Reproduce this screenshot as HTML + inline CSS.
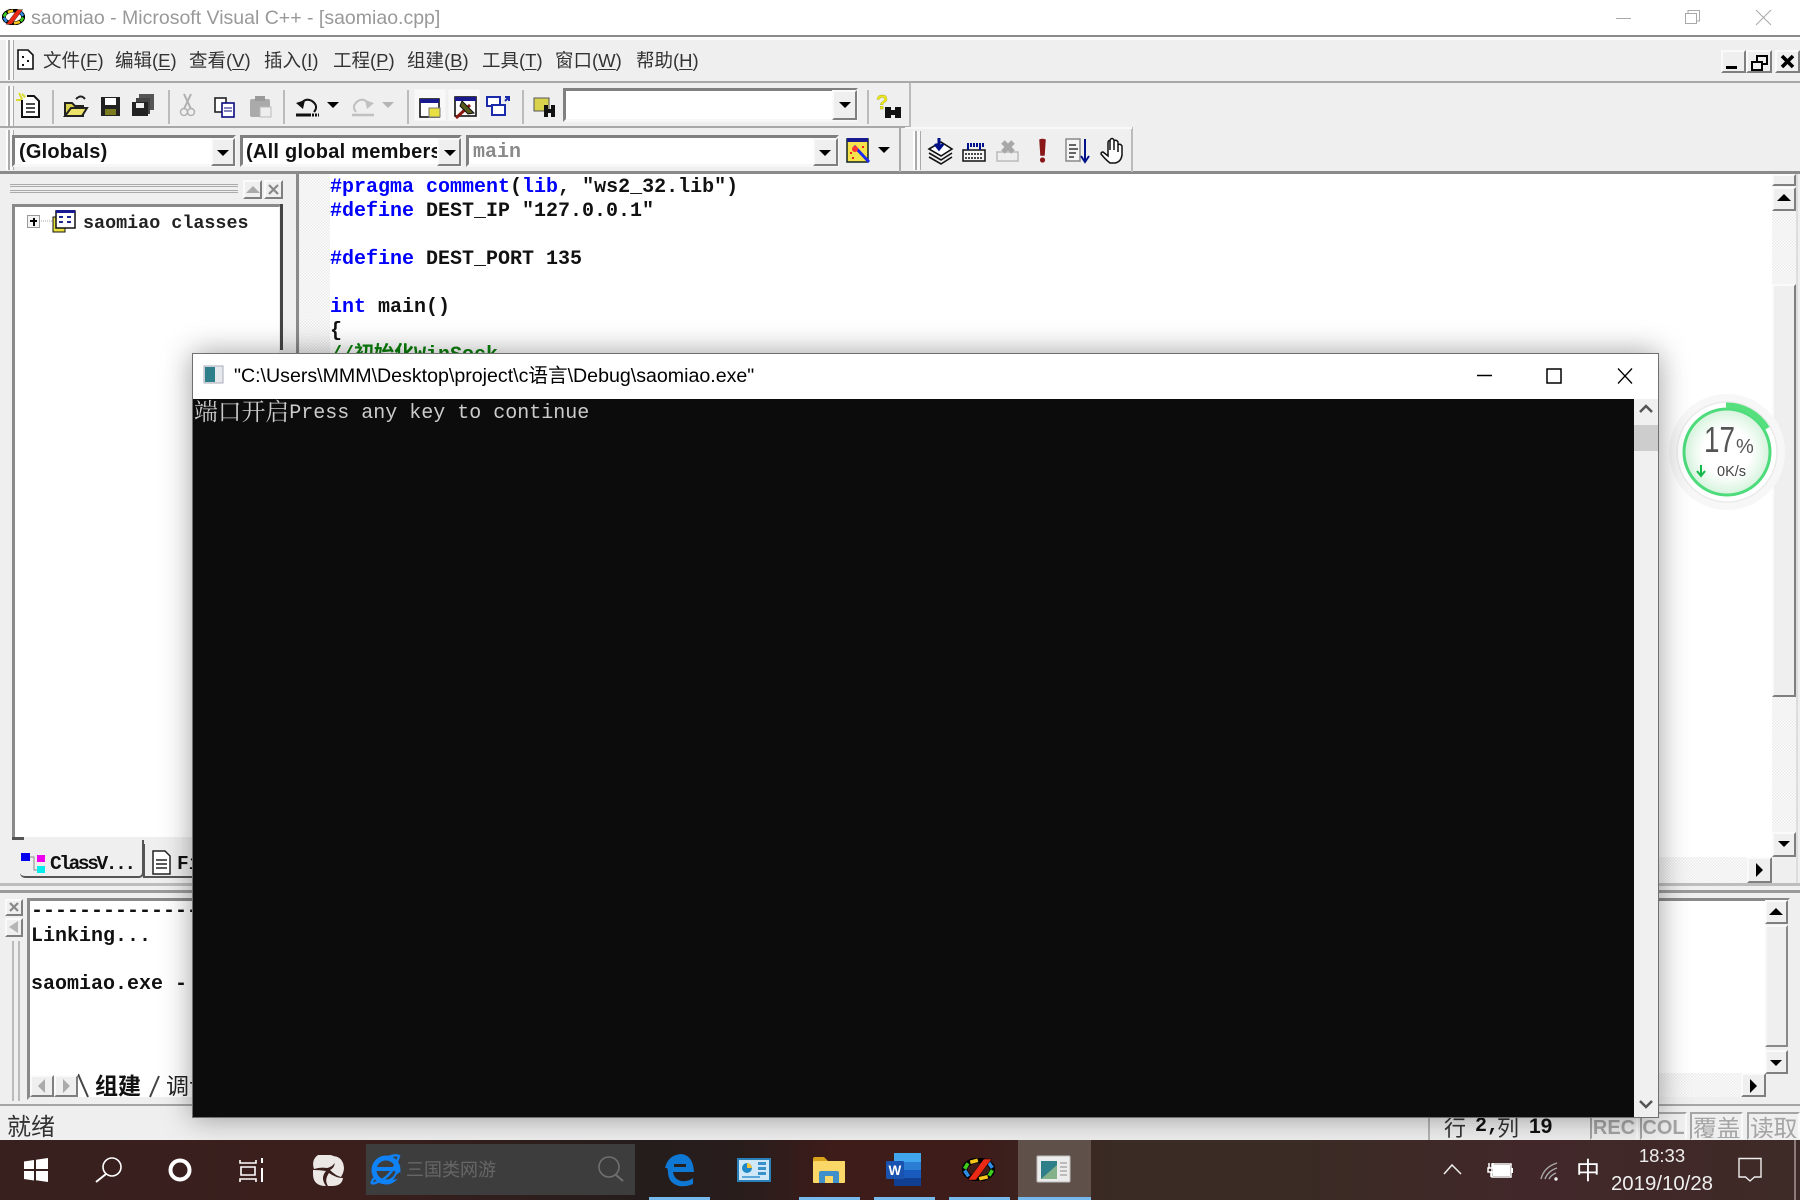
<!DOCTYPE html>
<html><head><meta charset="utf-8"><style>
html,body{margin:0;padding:0;width:1800px;height:1200px;overflow:hidden;background:#efefef}
body{filter:blur(.35px)}
*{box-sizing:border-box}
.a{position:absolute;white-space:pre}
.m{font-family:"Liberation Mono","Noto Sans CJK SC",monospace;font-weight:bold;font-size:20px;line-height:24px;color:#111}
.k{color:#0000ff}
.sunk{border:3px solid;border-color:#808080 #f7f7f7 #f7f7f7 #808080;background:#fff}
.btn{position:absolute;background:#efefef;border:2px solid;border-color:#fafafa #7f7f7f #7f7f7f #fafafa}
.hatch{position:absolute;background:repeating-conic-gradient(#ececec 0 25%,#fcfcfc 0 50%) 0 0/3px 3px}
.menu{position:absolute;top:48px;font:18.5px/26px "Liberation Sans","Noto Sans CJK SC",sans-serif;color:#333;white-space:pre}
.menu u{text-underline-offset:2px}
.drop{position:absolute;width:0;height:0;border-left:6px solid transparent;border-right:6px solid transparent;border-top:6px solid #000}
.up{position:absolute;width:0;height:0;border-left:7px solid transparent;border-right:7px solid transparent;border-bottom:7px solid #000}
.rt{position:absolute;width:0;height:0;border-top:7px solid transparent;border-bottom:7px solid transparent;border-left:7px solid #000}
.grip{position:absolute;border-left:2px solid #fff;border-right:2px solid #aaa;box-shadow:3px 0 0 #f8f8f8,4px 0 0 #aaa;width:4px}
.status{position:absolute;top:1112px;height:28px;border:2px solid;border-color:#a5a5a5 #f9f9f9 transparent #a5a5a5;color:#a5a5a5;font:bold 20px/28px "Liberation Sans",sans-serif;text-align:center;overflow:hidden;white-space:nowrap}
</style></head><body>

<!-- title bar -->
<div class="a" style="left:0;top:0;width:1800px;height:35px;background:#fff"></div>
<div class="a" style="left:0;top:35px;width:1800px;height:2px;background:#8a8a8a"></div>
<div class="a" style="left:31px;top:7px;font:19.5px/23px 'Liberation Sans',sans-serif;color:#999">saomiao - Microsoft Visual C++ - [saomiao.cpp]</div>

<!-- menu bar -->
<div class="a" style="left:0;top:37px;width:1800px;height:3px;background:#fafafa"></div>
<div class="a" style="left:0;top:81px;width:1800px;height:2px;background:#a8a8a8"></div>
<div class="menu" style="left:43px">文件(<u>F</u>)</div>
<div class="menu" style="left:115px">编辑(<u>E</u>)</div>
<div class="menu" style="left:189px">查看(<u>V</u>)</div>
<div class="menu" style="left:264px">插入(<u>I</u>)</div>
<div class="menu" style="left:333px">工程(<u>P</u>)</div>
<div class="menu" style="left:407px">组建(<u>B</u>)</div>
<div class="menu" style="left:482px">工具(<u>T</u>)</div>
<div class="menu" style="left:555px">窗口(<u>W</u>)</div>
<div class="menu" style="left:636px">帮助(<u>H</u>)</div>
<div class="grip" style="left:6px;top:40px;height:40px"></div>

<!-- MDI buttons -->
<div class="btn" style="left:1721px;top:50px;width:25px;height:23px"></div>
<div class="btn" style="left:1746px;top:50px;width:26px;height:23px"></div>
<div class="btn" style="left:1775px;top:50px;width:25px;height:23px"></div>

<!-- toolbar 1 -->
<div class="a" style="left:0;top:126px;width:910px;height:2px;background:#a8a8a8"></div>
<div class="a" style="left:909px;top:83px;width:2px;height:44px;background:#bbb"></div>
<div class="grip" style="left:6px;top:86px;height:40px"></div>
<div class="a" style="left:52px;top:90px;width:2px;height:34px;background:#bbb"></div>
<div class="a" style="left:168px;top:90px;width:2px;height:34px;background:#bbb"></div>
<div class="a" style="left:283px;top:90px;width:2px;height:34px;background:#bbb"></div>
<div class="a" style="left:407px;top:90px;width:2px;height:34px;background:#bbb"></div>
<div class="a" style="left:522px;top:90px;width:2px;height:34px;background:#bbb"></div>
<div class="a" style="left:867px;top:90px;width:2px;height:34px;background:#bbb"></div>
<div class="a" style="left:414px;top:89px;width:32px;height:32px;background:#f8f8f8;border:1px solid #f4f4f4"></div>
<div class="a" style="left:448px;top:89px;width:32px;height:32px;background:#f8f8f8;border:1px solid #f4f4f4"></div>
<div class="a sunk" style="left:563px;top:88px;width:295px;height:34px"></div>
<div class="btn" style="left:832px;top:90px;width:25px;height:30px"></div>
<div class="drop" style="left:839px;top:102px"></div>

<!-- toolbar 2 -->
<div class="a" style="left:0;top:171px;width:1800px;height:3px;background:#8a8a8a"></div>
<div class="a" style="left:899px;top:127px;width:2px;height:45px;background:#aaa"></div>
<div class="a" style="left:1131px;top:127px;width:2px;height:45px;background:#bbb"></div>
<div class="a" style="left:905px;top:127px;width:227px;height:2px;background:#f8f8f8"></div>
<div class="grip" style="left:6px;top:130px;height:40px"></div>
<div class="grip" style="left:913px;top:131px;height:39px"></div>
<div class="a sunk" style="left:12px;top:135px;width:224px;height:32px"></div>
<div class="btn" style="left:211px;top:138px;width:24px;height:28px"></div><div class="drop" style="left:217px;top:150px"></div>
<div class="a sunk" style="left:240px;top:135px;width:222px;height:32px"></div>
<div class="btn" style="left:437px;top:138px;width:24px;height:28px"></div><div class="drop" style="left:444px;top:150px"></div>
<div class="a sunk" style="left:466px;top:135px;width:373px;height:32px"></div>
<div class="btn" style="left:813px;top:138px;width:25px;height:28px"></div><div class="drop" style="left:819px;top:150px"></div>
<div class="drop" style="left:878px;top:147px"></div>
<div class="a" style="left:19px;top:140px;font:bold 20px/24px 'Liberation Sans',sans-serif;color:#111;letter-spacing:.2px">(Globals)</div>
<div class="a" style="left:246px;top:140px;width:191px;overflow:hidden;font:bold 20px/24px 'Liberation Sans',sans-serif;color:#111;letter-spacing:.25px">(All global members</div>
<div class="a m" style="left:473px;top:141px;color:#8a8a8a">main</div>

<!-- left class pane -->
<div class="a" style="left:10px;top:184px;width:228px;height:3px;border-top:1px solid #aaa;border-bottom:1px solid #aaa"></div>
<div class="a" style="left:10px;top:190px;width:228px;height:3px;border-top:1px solid #aaa;border-bottom:1px solid #aaa"></div>
<div class="btn" style="left:243px;top:180px;width:19px;height:19px"></div>
<div class="btn" style="left:264px;top:180px;width:19px;height:19px"></div>
<div class="up" style="left:246px;top:186px;border-bottom-color:#aaa"></div>
<div class="a" style="left:12px;top:204px;width:270px;height:636px;background:#fff;border:3px solid;border-color:#8a8a8a #efefef #efefef #8a8a8a"></div>
<div class="a" style="left:280px;top:204px;width:3px;height:146px;background:#444"></div>
<div class="a" style="left:27px;top:215px;width:13px;height:13px;background:#f4f4f4;border:1px solid #999"></div>
<div class="a" style="left:30px;top:220px;width:7px;height:2px;background:#000"></div>
<div class="a" style="left:33px;top:218px;width:2px;height:8px;background:#000"></div>
<div class="a" style="left:83px;top:212px;font:bold 18.4px/24px 'Liberation Mono',monospace;color:#222">saomiao classes</div>
<!-- class tabs -->
<div class="a" style="left:12px;top:837px;width:12px;height:3px;background:#555"></div>
<div class="a" style="left:20px;top:840px;width:124px;height:38px;background:#efefef;border-bottom:2px solid #555;border-right:2px solid #555;border-radius:0 0 5px 5px"></div>
<div class="a" style="left:143px;top:844px;width:60px;height:34px;border-left:2px solid #555;border-bottom:2px solid #555"></div>
<div class="a" style="left:50px;top:850px;font:bold 19.5px/28px 'Liberation Mono',monospace;color:#111;letter-spacing:-2.4px">ClassV...</div>
<div class="a" style="left:177px;top:850px;font:bold 19.5px/28px 'Liberation Mono',monospace;color:#111">Fi</div>

<!-- code pane -->
<div class="a" style="left:296px;top:174px;width:4px;height:712px;background:#8a8a8a;border-right:1px solid #eee"></div>
<div class="a" style="left:300px;top:174px;width:1472px;height:683px;background:#fff"></div>
<div class="hatch" style="left:300px;top:174px;width:30px;height:683px"></div>
<div class="a m" style="left:330px;top:176px"><span class="k">#pragma comment</span>(<span class="k">lib</span>, "ws2_32.lib")</div>
<div class="a m" style="left:330px;top:200px"><span class="k">#define</span> DEST_IP "127.0.0.1"</div>
<div class="a m" style="left:330px;top:248px"><span class="k">#define</span> DEST_PORT 135</div>
<div class="a m" style="left:330px;top:296px"><span class="k">int</span> main()</div>
<div class="a m" style="left:330px;top:320px">{</div>
<div class="a m" style="left:330px;top:344px;color:#0a800a">//初始化WinSock</div>

<!-- code scrollbars -->
<div class="hatch" style="left:1772px;top:175px;width:24px;height:682px"></div>
<div class="btn" style="left:1772px;top:174px;width:24px;height:12px"></div>
<div class="btn" style="left:1772px;top:187px;width:24px;height:24px"></div><div class="up" style="left:1777px;top:194px;border-bottom-color:#000"></div>
<div class="btn" style="left:1772px;top:284px;width:24px;height:413px"></div>
<div class="btn" style="left:1772px;top:832px;width:24px;height:25px"></div><div class="drop" style="left:1778px;top:841px"></div>
<div class="hatch" style="left:300px;top:857px;width:1447px;height:26px"></div>
<div class="btn" style="left:1747px;top:857px;width:25px;height:26px"></div><div class="rt" style="left:1756px;top:863px"></div>
<div class="a" style="left:1796px;top:174px;width:2px;height:712px;background:#ddd"></div>

<!-- splitter -->
<div class="a" style="left:0;top:883px;width:1800px;height:3px;background:#bdbdbd"></div>
<div class="a" style="left:0;top:890px;width:1800px;height:3px;background:#9a9a9a"></div>

<!-- output pane -->
<div class="btn" style="left:5px;top:899px;width:18px;height:17px"></div>
<div class="btn" style="left:5px;top:918px;width:18px;height:19px"></div>
<div class="a" style="left:12px;top:941px;width:8px;height:160px;border-left:2px solid #bbb;border-right:2px solid #bbb"></div>
<div class="a" style="left:27px;top:898px;width:1763px;height:202px;border:3px solid;border-color:#8a8a8a #efefef #efefef #8a8a8a;background:#fff"></div>
<div class="a m" style="left:31px;top:900px">--------------</div>
<div class="a m" style="left:31px;top:925px">Linking...</div>
<div class="a m" style="left:31px;top:973px">saomiao.exe -</div>
<div class="btn" style="left:30px;top:1075px;width:24px;height:22px"></div>
<div class="btn" style="left:54px;top:1075px;width:24px;height:22px"></div>
<div class="a" style="left:38px;top:1079px;border-top:7px solid transparent;border-bottom:7px solid transparent;border-right:7px solid #aaa"></div>
<div class="rt" style="left:63px;top:1079px;border-left-color:#aaa"></div>
<svg class="a" style="left:78px;top:1072px" width="120" height="28"><path d="M0 2L10 25M72 25L81 4" fill="none" stroke="#444" stroke-width="2"/></svg>
<div class="a" style="left:95px;top:1072px;font:bold 23px/28px 'Liberation Sans','Noto Sans CJK SC',sans-serif;color:#111">组建</div>
<div class="a" style="left:166px;top:1072px;font:23px/28px 'Liberation Sans','Noto Sans CJK SC',sans-serif;color:#222">调试</div>
<div class="hatch" style="left:193px;top:1073px;width:1548px;height:24px"></div>
<div class="btn" style="left:1741px;top:1073px;width:25px;height:24px"></div><div class="rt" style="left:1750px;top:1079px"></div>
<div class="a" style="left:1766px;top:900px;width:22px;height:198px;background:#efefef"></div>
<div class="btn" style="left:1765px;top:900px;width:23px;height:24px"></div><div class="up" style="left:1769px;top:908px"></div>
<div class="btn" style="left:1765px;top:925px;width:23px;height:122px;border-color:#f8f8f8 #8a8a8a #8a8a8a #f8f8f8"></div>
<div class="btn" style="left:1765px;top:1050px;width:23px;height:24px"></div><div class="drop" style="left:1770px;top:1060px"></div>

<!-- status bar -->
<div class="a" style="left:0;top:1104px;width:1800px;height:2px;background:#a5a5a5"></div>
<div class="a" style="left:7px;top:1112px;font:24px/32px 'Liberation Sans','Noto Sans CJK SC',sans-serif;color:#333">就绪</div>
<div class="a" style="left:1428px;top:1112px;width:160px;height:28px;border-left:2px solid #b5b5b5;border-top:2px solid #b5b5b5"></div>
<div class="a" style="left:1444px;top:1112px;font:22px/30px 'Noto Sans CJK SC',sans-serif;color:#333">行</div>
<div class="a" style="left:1475px;top:1113px;font:bold 20px/28px 'Liberation Mono',monospace;color:#111">2,</div>
<div class="a" style="left:1497px;top:1112px;font:22px/30px 'Noto Sans CJK SC',sans-serif;color:#333">列</div>
<div class="a" style="left:1529px;top:1113px;font:bold 21px/28px 'Liberation Sans',sans-serif;color:#111">19</div>
<div class="status" style="left:1590px;width:48px">REC</div>
<div class="status" style="left:1640px;width:47px">COL</div>
<div class="status" style="left:1690px;width:53px;font:24px/26px 'Noto Sans CJK SC',sans-serif;letter-spacing:-.5px">覆盖</div>
<div class="status" style="left:1747px;width:53px;font:24px/26px 'Noto Sans CJK SC',sans-serif;letter-spacing:-.5px">读取</div>

<!-- network widget -->
<svg class="a" style="left:1665px;top:390px" width="124" height="124" viewBox="1665 390 124 124">
<defs><radialGradient id="g" cx="50%" cy="50%" r="50%"><stop offset="55%" stop-color="#fff"/><stop offset="100%" stop-color="#d5f3dc"/></radialGradient></defs>
<circle cx="1727" cy="452" r="58" fill="#f7f7f7"/>
<circle cx="1727" cy="452" r="50" fill="#fff" stroke="#ebebeb" stroke-width="1.5"/>
<circle cx="1727" cy="452" r="43" fill="url(#g)" stroke="#4ddb7c" stroke-width="3"/>
<path d="M1726 405.5A46.5 46.5 0 0 1 1767 428.5" fill="none" stroke="#55e07d" stroke-width="6"/>
<text x="1704" y="452" font-family="Liberation Sans" font-size="36" fill="#555" textLength="31" lengthAdjust="spacingAndGlyphs">17</text>
<text x="1736" y="453" font-family="Liberation Sans" font-size="20" fill="#555">%</text>
<text x="1717" y="476" font-family="Liberation Sans" font-size="14.5" fill="#444">0K/s</text>
<path d="M1701 465V475M1697 471L1701 476L1705 471" fill="none" stroke="#12b84a" stroke-width="2"/>
</svg>

<!-- console window -->
<div class="a" style="left:192px;top:353px;width:1467px;height:765px;background:#fff;border:1px solid #707070;box-shadow:0 0 28px rgba(0,0,0,.38);overflow:hidden">
 <div class="a" style="left:0;top:45px;width:1441px;height:719px;background:#0c0c0c"></div>
 <div class="a" style="left:1441px;top:45px;width:25px;height:719px;background:#f0f0f0"></div>
 <div class="a" style="left:1441px;top:71px;width:24px;height:26px;background:#cdcdcd"></div>
 <div class="a" style="left:41px;top:10px;width:560px;font:19.6px/24px 'Liberation Sans','Noto Sans CJK SC',sans-serif;color:#000">"C:\Users\MMM\Desktop\project\c语言\Debug\saomiao.exe"</div>
 <div class="a" style="left:1px;top:40px;height:40px;font:20px/28px 'Liberation Mono',monospace;color:#cccccc"><span style="font:23.8px/28px 'Noto Serif CJK SC',serif;position:relative;top:2px">端口开启</span>Press any key to continue</div>
 <svg class="a" style="left:1px;top:0" width="1466" height="765">
  <path d="M1283 21.5H1298" stroke="#000" stroke-width="1.5"/>
  <rect x="1353" y="15" width="14" height="14" fill="none" stroke="#000" stroke-width="1.5"/>
  <path d="M1424 14.5L1438 29.5M1438 14.5L1424 29.5" stroke="#000" stroke-width="1.3"/>
  <rect x="10" y="12" width="19" height="17" fill="#e6e9ec" stroke="#aab"/>
  <rect x="11" y="13" width="10" height="15" fill="#2f7f8a"/>
  <path d="M1446 416l6-6 6 6" transform="translate(0,-358)" fill="none" stroke="#555" stroke-width="2.5"/>
  <path d="M1446 1100l6 6 6-6" transform="translate(0,-353)" fill="none" stroke="#555" stroke-width="2.5"/>
 </svg>
</div>

<!-- taskbar -->
<div class="a" style="left:0;top:1140px;width:1800px;height:60px;background:linear-gradient(90deg,#38201f 0,#3a1f1c 20%,#241d1c 36%,#2a1d1c 42%,#3d1c1a 46%,#3d1c1a 54%,#3a2b24 62%,#3a2b24 72%,#42272a 85%,#3e2a26 100%)"></div>
<div class="a" style="left:366px;top:1144px;width:269px;height:51px;background:#3d3d3d"></div>
<div class="a" style="left:406px;top:1157px;font:18px/26px 'Liberation Sans','Noto Sans CJK SC',sans-serif;color:#666">三国类网游</div>
<div class="a" style="left:1018px;top:1140px;width:73px;height:60px;background:#5f5149"></div>
<div class="a" style="left:649px;top:1197px;width:61px;height:3px;background:#76b9ed"></div>
<div class="a" style="left:799px;top:1197px;width:61px;height:3px;background:#76b9ed"></div>
<div class="a" style="left:874px;top:1197px;width:61px;height:3px;background:#76b9ed"></div>
<div class="a" style="left:949px;top:1197px;width:61px;height:3px;background:#76b9ed"></div>
<div class="a" style="left:1018px;top:1197px;width:73px;height:3px;background:#76b9ed"></div>
<div class="a" style="left:1638px;top:1144px;width:48px;text-align:center;font:18.5px/24px 'Liberation Sans',sans-serif;color:#eee">18:33</div>
<div class="a" style="left:1608px;top:1172px;width:108px;text-align:center;font:20.4px/24px 'Liberation Sans',sans-serif;color:#eee">2019/10/28</div>
<div class="a" style="left:1576px;top:1154px;font:24px/30px 'Noto Sans CJK SC',sans-serif;color:#fff">中</div>
<div class="a" style="left:1794px;top:1140px;width:2px;height:60px;background:#8a7a78"></div>

<!-- icons overlay -->
<svg class="a" style="left:0;top:0;pointer-events:none" width="1800" height="1200" viewBox="0 0 1800 1200">
<defs>
<symbol id="vc" viewBox="0 0 100 70" preserveAspectRatio="none">
 <ellipse cx="50" cy="35" rx="42" ry="28" fill="none" stroke="#000" stroke-width="17"/>
 <path d="M25 13L48 7M52 63L78 57" stroke="#f7c616" stroke-width="11"/>
 <path d="M8 33L18 16M92 37L82 54" stroke="#3bd01c" stroke-width="11"/>
 <path d="M8 38L20 56M80 13L92 30" stroke="#2d8de8" stroke-width="11"/>
 <path d="M18 67L66 3H90L42 67Z" fill="#ea2a14" stroke="#000" stroke-width="1.5"/>
</symbol>
</defs>
<use href="#vc" x="2" y="9" width="23" height="16"/>

<!-- menu doc icon -->
<path d="M18 50H28L33 55V69H18Z" fill="#fff" stroke="#111" stroke-width="1.6"/><path d="M22 57h2M27 61h2M22 65h2" stroke="#111" stroke-width="2"/>

<!-- MDI glyphs -->
<path d="M1726 67.5h11" stroke="#000" stroke-width="3"/>
<rect x="1757" y="56" width="10" height="8" fill="none" stroke="#000" stroke-width="2"/><rect x="1752" y="62" width="10" height="8" fill="#efefef" stroke="#000" stroke-width="2"/>
<path d="M1782 56L1793 67M1793 56L1782 67" stroke="#000" stroke-width="3.6"/>

<!-- titlebar win controls -->
<path d="M1616 18.5H1631" stroke="#a8a8a8" stroke-width="1"/>
<rect x="1685.5" y="13.5" width="11" height="10" fill="none" stroke="#a8a8a8"/><path d="M1688 13V10.5H1699.5V21H1697" fill="none" stroke="#a8a8a8"/>
<path d="M1756 10L1771 25M1771 10L1756 25" stroke="#a8a8a8" stroke-width="1"/>

<!-- class pane X -->
<path d="M269 185L278 194M278 185L269 194" stroke="#888" stroke-width="2.2"/>

<!-- toolbar 1 icons -->
<path d="M22 94L27 99M16 100L24 100M19 93L22 99" stroke="#dbdb30" stroke-width="2"/>
<path d="M27 96H34L39 101V117H22V100" fill="#fff" stroke="#111" stroke-width="2"/><path d="M26 104H35M26 108H35M26 112H35" stroke="#111" stroke-width="1.5"/>
<path d="M65 116V103H72L75 106H83V116Z" fill="#d8d24c" stroke="#222" stroke-width="2"/><path d="M65 116L71 108H87L82 116Z" fill="#eee36a" stroke="#222" stroke-width="2"/><path d="M76 99Q81 94 85 99" fill="none" stroke="#222" stroke-width="2"/>
<rect x="101" y="97" width="19" height="19" fill="#222"/><rect x="105" y="98" width="11" height="7" fill="#fff"/><rect x="105" y="109" width="11" height="6" fill="#7b7b20"/>
<rect x="139" y="94" width="15" height="16" fill="#555"/><rect x="136" y="98" width="14" height="16" fill="#444"/><rect x="132" y="102" width="16" height="14" fill="#222"/><rect x="136" y="103" width="8" height="5" fill="#eee"/>
<path d="M184 109L191 94M191 109L184 94" stroke="#b0b0b0" stroke-width="2"/><circle cx="184" cy="112" r="3.5" fill="none" stroke="#b0b0b0" stroke-width="1.5"/><circle cx="191" cy="112" r="3.5" fill="none" stroke="#b0b0b0" stroke-width="1.5"/>
<rect x="215" y="98" width="11" height="14" fill="#fff" stroke="#222" stroke-width="1.6"/><rect x="222" y="103" width="12" height="14" fill="#fff" stroke="#0a0a80" stroke-width="1.6"/><path d="M224 108h8M224 111h8" stroke="#0a0a80"/>
<rect x="250" y="99" width="20" height="18" rx="2" fill="#aaa"/><rect x="255" y="96" width="10" height="5" fill="#999"/><rect x="260" y="107" width="11" height="10" fill="#eee" stroke="#bbb"/>
<path d="M300 105Q305 97 312 101Q319 106 314 112" fill="none" stroke="#111" stroke-width="2"/><path d="M296 103L305 100L303 109Z" fill="#111"/><path d="M296 115H311" stroke="#111" stroke-width="3"/><path d="M312 115h7" stroke="#111" stroke-dasharray="2 1" stroke-width="3"/>
<polygon points="327,102 339,102 333,108" fill="#000"/>
<path d="M370 105Q364 97 358 101Q351 106 356 112" fill="none" stroke="#c0c0c0" stroke-width="2"/><path d="M374 103L365 100L367 109Z" fill="#c0c0c0"/><path d="M352 115H374" stroke="#c0c0c0" stroke-width="2.5"/>
<polygon points="382,102 394,102 388,108" fill="#b4b4b4"/>
<rect x="420" y="99" width="19" height="18" fill="#fff" stroke="#111" stroke-width="1.6"/><rect x="420" y="99" width="19" height="4" fill="#1a1a90"/><rect x="429" y="108" width="11" height="9" fill="#e8e040" stroke="#777"/>
<rect x="455" y="97" width="21" height="19" fill="#fff" stroke="#111" stroke-width="1.6"/><rect x="455" y="97" width="21" height="4" fill="#1a1a90"/><path d="M456 118L470 105" stroke="#8a1a10" stroke-width="3"/><path d="M462 101L474 113L468 114L460 106Z" fill="#5a5a1a" stroke="#111"/>
<rect x="487" y="97" width="13" height="9" fill="#fff" stroke="#1a2aaa" stroke-width="2"/><rect x="492" y="105" width="13" height="10" fill="#fff" stroke="#1a2aaa" stroke-width="2"/><path d="M505 101L509 97M509 101V97H505" stroke="#1a2aaa" stroke-width="2" fill="none"/>
<rect x="534" y="98" width="15" height="13" fill="#d8d24c" stroke="#555"/><path d="M544 105h4v12h-4zM551 105h4v12h-4zM548 109h3v4h-3z" fill="#111"/>
<text x="876" y="109" font-family="Liberation Sans" font-weight="bold" font-size="20" fill="#efe81e" stroke="#a8a820" stroke-width=".4">?</text>
<path d="M885 107h6v11h-6zM895 107h6v11h-6zM891 110h4v5h-4z" fill="#111"/>

<!-- toolbar 2 icons -->
<rect x="847" y="139" width="21" height="23" fill="#f6e24a" stroke="#122" stroke-width="1.5"/><rect x="847" y="138" width="21" height="4" fill="#1a1a90"/><path d="M854 146L869 162" stroke="#1a2aee" stroke-width="3"/><circle cx="855" cy="149" r="3" fill="#f33"/><path d="M850 153h2M862 147h2M852 158h2" stroke="#e22" stroke-width="2"/>
<path d="M929 149L941 142L952 149L941 156Z" fill="#fff" stroke="#111" stroke-width="1.6"/><path d="M929 153L941 160L952 153M929 157L941 164L952 157" fill="none" stroke="#111" stroke-width="1.6"/><path d="M939 138V148M935 144L939 149L943 144" stroke="#00108a" stroke-width="3" fill="none"/>
<rect x="963" y="150" width="22" height="11" fill="#f4f4f4" stroke="#111" stroke-width="1.5"/><path d="M965 154h18M965 158h18" stroke="#111" stroke-dasharray="2 1" stroke-width="1.5"/><path d="M967 145h18" stroke="#00108a" stroke-dasharray="2 1" stroke-width="4"/><path d="M968 143v7M980 143v7" stroke="#00108a" stroke-width="2"/>
<rect x="997" y="152" width="21" height="9" fill="#eee" stroke="#bbb" stroke-width="1.5"/><path d="M1003 142L1013 152M1013 142L1003 152" stroke="#a8a8a8" stroke-width="5"/>
<path d="M1040 140Q1042 139 1045 140L1044 155H1041Z" fill="#8a1818" stroke="#8a1818" stroke-width="1.5"/><circle cx="1042.5" cy="160" r="2.6" fill="#8a1818"/>
<rect x="1066" y="139" width="14" height="22" fill="#f4f4f4" stroke="#8a8a8a" stroke-width="1.5"/><path d="M1069 145h7M1069 149h9M1069 153h7M1069 157h5" stroke="#333" stroke-width="1.5"/><path d="M1085 139V160M1081 156L1085 162L1089 156" stroke="#00108a" stroke-width="2" fill="none"/>
<path d="M1103 152L1108 156V143Q1108 140 1110 141V150V140Q1112 137 1114 140V150V141Q1116 139 1118 142V152V145Q1120 143 1122 146V155Q1121 162 1115 163H1110Q1106 160 1101 154Q1101 152 1103 152Z" fill="#fff" stroke="#111" stroke-width="1.5"/>

<!-- tree icon -->
<path d="M41 221H52" stroke="#aaa" stroke-dasharray="1 1"/>
<rect x="53" y="217" width="12" height="15" fill="#e8e040" stroke="#111"/><rect x="56" y="211" width="19" height="17" fill="#fff" stroke="#111" stroke-width="1.5"/><rect x="56" y="210" width="19" height="3" fill="#1a1a90"/><path d="M59 217h4M67 217h4M59 222h4M67 222h4" stroke="#1a2a90" stroke-width="2"/>

<!-- classview tab icons -->
<rect x="21" y="853" width="9" height="8" fill="#0000ee"/><rect x="37" y="855" width="8" height="7" fill="#ee00ee"/><rect x="37" y="866" width="8" height="7" fill="#00eeee"/><path d="M30 857H34V870H37" fill="none" stroke="#888"/>
<path d="M153 851H165L170 856V874H153Z" fill="#fff" stroke="#222" stroke-width="1.5"/><path d="M156 860h11M156 864h11M156 868h11" stroke="#222" stroke-width="1.5"/>

<!-- output close/arrow -->
<path d="M10 903L18 911M18 903L10 911" stroke="#888" stroke-width="2.2"/>
<polygon points="18,921 18,933 9,927" fill="#b5b5b5"/>

<!-- taskbar -->
<path d="M24 1161.5L34 1160V1169H24ZM36 1159.7L48 1158V1169H36ZM24 1171H34V1180.5L24 1179ZM36 1171H48V1182L36 1180.3Z" fill="#fff"/>
<circle cx="112" cy="1167" r="9" fill="none" stroke="#fff" stroke-width="1.6"/><path d="M106 1174L96 1182" stroke="#fff" stroke-width="2"/>
<circle cx="180" cy="1170" r="9.5" fill="none" stroke="#fff" stroke-width="4"/>
<path d="M240 1160V1163H256V1160M240 1182V1179H256V1182M241 1167H255V1175H241Z" fill="none" stroke="#fff" stroke-width="1.6"/><path d="M262 1158V1163M262 1168V1182" stroke="#fff" stroke-width="2"/>
<path d="M318 1155H330Q335 1155 335 1160Q335 1166 327 1168Q320 1167 314 1169Q311 1160 318 1155Z" fill="#ece8e6"/><path d="M332 1156Q343 1156 344 1168Q344 1172 341 1177Q336 1176 330 1170Q338 1166 332 1156Z" fill="#ece8e6"/><path d="M313 1170Q320 1170 326 1171Q320 1178 326 1186Q313 1186 313 1174Z" fill="#ece8e6"/><path d="M329 1173Q336 1178 343 1178Q342 1186 332 1186H328Q324 1180 329 1173Z" fill="#ece8e6"/>

<!-- IE -->
<circle cx="386" cy="1170" r="12" fill="none" stroke="#0f82f8" stroke-width="5"/><rect x="376" y="1167" width="22" height="4" fill="#0f82f8"/><path d="M397 1174L400 1172L400 1178L393 1180Z" fill="#3d3d3d"/>
<path d="M376 1176Q368 1185 375 1183Q392 1178 399 1156Q396 1154 386 1158" fill="none" stroke="#0f82f8" stroke-width="2.5"/>
<circle cx="609" cy="1167" r="10" fill="none" stroke="#707070" stroke-width="1.6"/><path d="M616 1175L623 1181" stroke="#707070" stroke-width="2"/>

<!-- Edge -->
<path d="M665 1168Q668 1155 681 1154Q693 1155 694 1172H673Q674 1179 681 1181Q688 1182 693 1178V1184Q686 1187 679 1186Q668 1183 668 1172Q668 1167 665 1168Z" fill="#0f78d4"/>
<rect x="674" y="1164" width="12" height="3" fill="#24201f"/>

<!-- control panel -->
<rect x="738" y="1159" width="32" height="22" fill="#cfe7f6" stroke="#2a80b8" stroke-width="2"/><circle cx="747" cy="1168" r="5" fill="#1e88c8"/><path d="M747 1168V1163A5 5 0 0 1 752 1168Z" fill="#f2c33a"/><rect x="758" y="1162" width="8" height="3" fill="#3a90c8"/><rect x="758" y="1167" width="8" height="3" fill="#3a90c8"/><rect x="758" y="1172" width="8" height="3" fill="#3a90c8"/><path d="M742 1177h18" stroke="#5aa8d8" stroke-width="2"/>

<!-- Folder -->
<path d="M813 1159Q813 1157 815 1157H824L828 1161H845V1165H813Z" fill="#d8a318"/><rect x="813" y="1161" width="32" height="22" rx="1" fill="#fbd768"/><path d="M819 1183V1173Q819 1171 821 1171H837Q839 1171 839 1173V1183H833V1176H825V1183Z" fill="#3f8fcb"/>

<!-- Word -->
<rect x="894" y="1153" width="27" height="9" fill="#41a5ee"/><rect x="894" y="1162" width="27" height="8" fill="#2b7cd3"/><rect x="894" y="1170" width="27" height="8" fill="#185abd"/><rect x="894" y="1178" width="27" height="8" fill="#103f91"/>
<rect x="886" y="1161" width="18" height="18" rx="1" fill="#1a52b0"/>
<text x="888.5" y="1175" font-family="Liberation Sans" font-weight="bold" font-size="13.5" fill="#fff">W</text>

<!-- VC taskbar -->
<use href="#vc" x="962" y="1158" width="33" height="23"/>

<!-- console taskbar -->
<rect x="1037" y="1156" width="33" height="26" rx="1" fill="#ececec" stroke="#bdbdbd"/><rect x="1041" y="1161" width="16" height="18" fill="#2f7f8a"/><path d="M1041 1179L1057 1165V1179Z" fill="#84b08a"/><path d="M1060 1163h7M1060 1167h7M1060 1171h7M1060 1175h7" stroke="#bbb" stroke-width="2"/>

<!-- tray -->
<path d="M1444 1174L1452 1165L1461 1174" fill="none" stroke="#eee" stroke-width="1.5"/>
<rect x="1493" y="1165" width="17" height="11" fill="#fff"/><rect x="1492" y="1164" width="19" height="13" fill="none" stroke="#fff" stroke-width="1.5"/><rect x="1511" y="1168" width="2" height="5" fill="#fff"/><path d="M1489 1163V1168M1493 1163V1168M1488 1168H1494V1172H1488ZM1491 1172V1177" fill="none" stroke="#fff" stroke-width="1.5"/>
<path d="M1541 1179Q1544 1167 1557 1163M1545 1179Q1548 1171 1557 1168M1549 1179Q1551 1175 1556 1173" fill="none" stroke="#aaa" stroke-width="1.4"/><circle cx="1556" cy="1179" r="1.7" fill="#eee"/>
<path d="M1739 1158.5H1761V1177H1754.5L1750 1181L1745.5 1177H1739Z" fill="none" stroke="#eee" stroke-width="1.4"/>
</svg>
</body></html>
